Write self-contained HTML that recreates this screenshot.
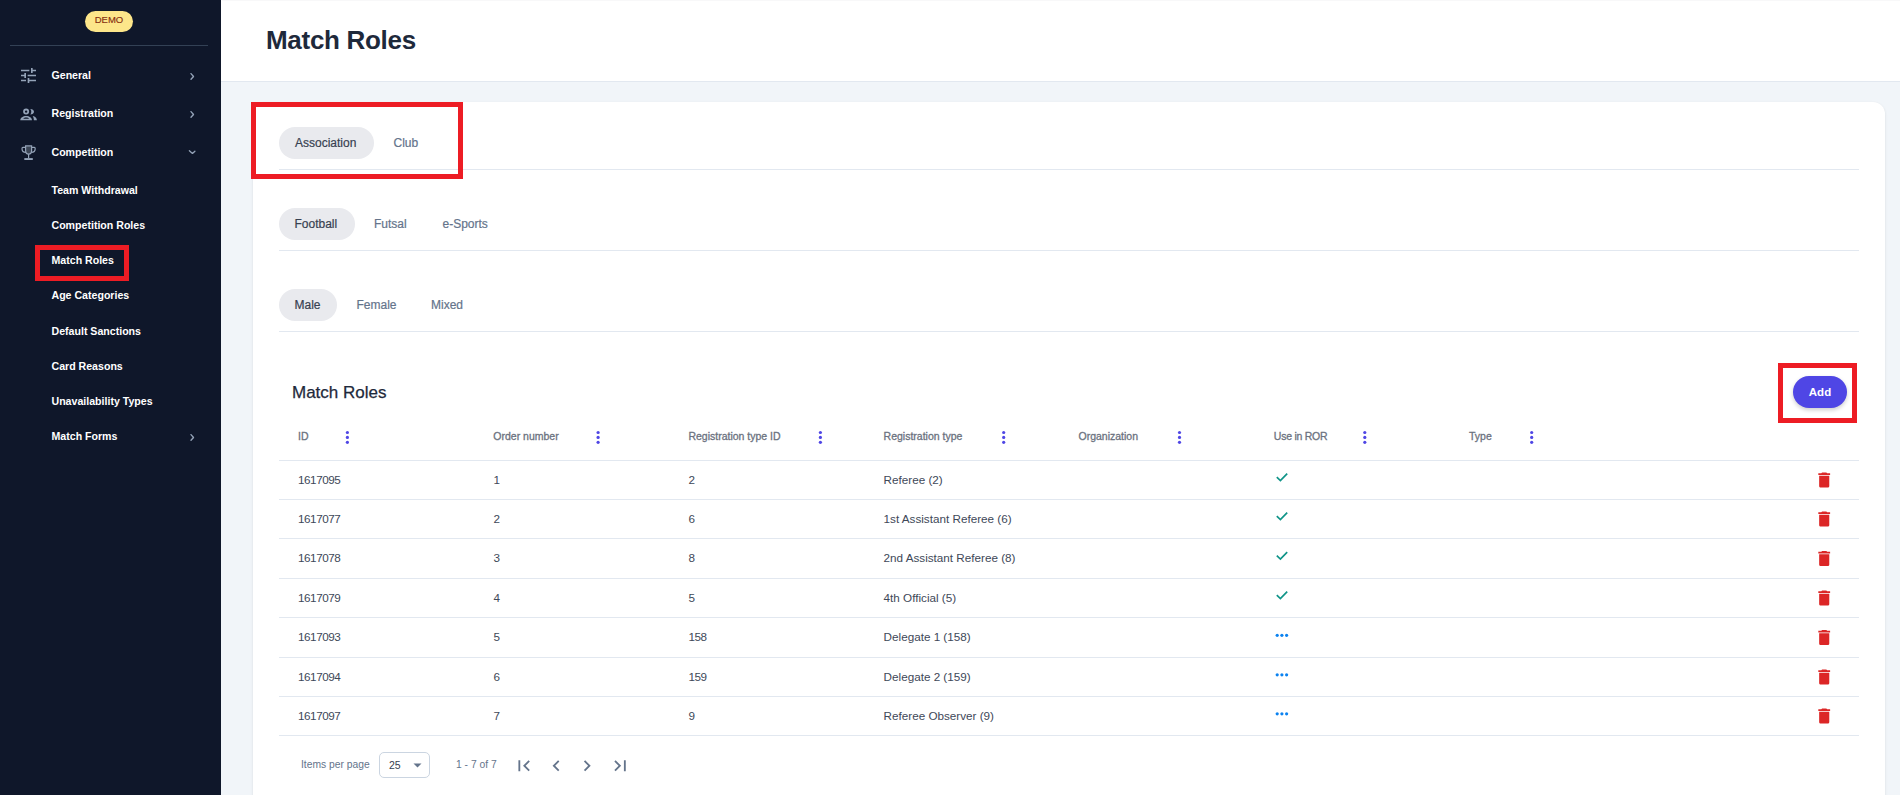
<!DOCTYPE html>
<html>
<head>
<meta charset="utf-8">
<style>
*{box-sizing:border-box;margin:0;padding:0}
html,body{width:1900px;height:795px;overflow:hidden;background:#f1f5f9;font-family:"Liberation Sans",sans-serif}
.abs{position:absolute}
#side{position:absolute;left:0;top:0;width:221px;height:795px;background:#0f172a}
#demo{position:absolute;left:85px;top:11px;width:48px;height:21px;border-radius:11px;background:#fde68a;color:#862e10;font-size:9.5px;line-height:18.5px;text-align:center;-webkit-text-stroke:0.15px #862e10}
#sep{position:absolute;left:10px;top:45px;width:198px;height:1px;background:#334155}
.nav{position:absolute;color:#fff;font-weight:bold;font-size:10.6px;white-space:nowrap;line-height:1}
.ico{position:absolute}
#head{position:absolute;left:221px;top:0;width:1679px;height:82px;background:#fff;border-bottom:1px solid #e2e8f0}
#title{position:absolute;left:266px;top:27px;font-size:26px;font-weight:bold;color:#1e293b;letter-spacing:-0.3px;line-height:1;white-space:nowrap}
#card{position:absolute;left:253px;top:102px;width:1632px;height:720px;background:#fff;border-radius:12px;box-shadow:0 1px 3px 0 rgba(0,0,0,.1),0 1px 1px 0 rgba(0,0,0,.03)}
.pill{position:absolute;height:32px;border-radius:16px;background:#e9eaee}
.tab{position:absolute;font-size:12px;color:#64748b;white-space:nowrap;line-height:1;-webkit-text-stroke-width:0.2px}
.tab.on{color:#374151}
.div{position:absolute;left:279px;width:1580px;height:1px;background:#e2e8f0}
.red{position:absolute;border:5px solid #ed1c24}
.sub{position:absolute;font-size:17px;color:#1e293b;white-space:nowrap;line-height:1;-webkit-text-stroke:0.25px #1e293b}
#add{position:absolute;left:1793px;top:376px;width:54px;height:32px;border-radius:16px;background:#4f46e5;color:#fff;font-weight:bold;font-size:11.5px;line-height:32px;text-align:center;box-shadow:0 2px 4px rgba(0,0,0,.2)}
.th{position:absolute;font-size:10.5px;font-weight:normal;color:#6b7280;white-space:nowrap;line-height:1;-webkit-text-stroke:0.3px #6b7280}
.keb{position:absolute;top:430px}
.td{position:absolute;font-size:11.7px;color:#404858;white-space:nowrap;line-height:1}
.num{letter-spacing:-0.45px}
.rl{position:absolute;left:279px;width:1580px;height:1px;background:#e2e8f0}
.pg{position:absolute;font-size:10.3px;color:#64748b;white-space:nowrap;line-height:1}
#sel{position:absolute;left:379px;top:752px;width:51px;height:26px;border:1px solid #cbd5e1;border-radius:5px;background:#fff}
#sel span{position:absolute;left:9px;top:7px;font-size:10.5px;color:#374151;line-height:1}
</style>
</head>
<body>
<div id="side">
<div id="demo">DEMO</div><div id="sep"></div>
<svg class="abs" style="left:0;top:0" width="221" height="200" viewBox="0 0 221 200">
<g transform="translate(18.5 65.5) scale(0.8333)" fill="#94a3b8"><path d="M3 17v2h6v-2H3zM3 5v2h10V5H3zm10 16v-2h8v-2h-8v-2h-2v6h2zM7 9v2H3v2h4v2h2V9H7zm14 4v-2H11v2h10zm-6-4h2V7h4V5h-4V3h-2v6z"/></g>
<circle cx="26.1" cy="111.6" r="2.1" fill="none" stroke="#94a3b8" stroke-width="1.8"/>
<path d="M30.3 108.9C32.5 108.9 34 110.2 34 111.75C34 113.3 32.5 114.6 30.3 114.6C31 113.8 31.3 112.8 31.3 111.75C31.3 110.7 31 109.7 30.3 108.9Z" fill="#94a3b8"/>
<path fill-rule="evenodd" fill="#94a3b8" d="M20.3 120.3C20.3 117.6 23 115.9 26.15 115.9C29.3 115.9 32 117.6 32 120.3ZM23.2 118.8C23.8 118 24.9 117.5 26.15 117.5C27.4 117.5 28.5 118 29.1 118.8Z"/>
<path fill="#94a3b8" d="M32.7 116C35.2 116.5 36.9 118.1 36.9 120.3H33.9C33.9 118.6 33.5 117.2 32.7 116Z"/>
<path d="M25.6 145.9H31.6V150.5C31.6 152.6 30.3 154.1 28.6 154.1C26.9 154.1 25.6 152.6 25.6 150.5Z" fill="#3b4555" stroke="#94a3b8" stroke-width="1.2"/>
<path d="M25.6 147.4H22.9C22.3 147.4 22 147.9 22 148.8C22 150.9 23.4 152.4 25.9 152.4M31.6 147.4H34.3C34.9 147.4 35.2 147.9 35.2 148.8C35.2 150.9 33.8 152.4 31.3 152.4" fill="none" stroke="#94a3b8" stroke-width="1.2"/>
<path d="M28.6 154V158.3" stroke="#94a3b8" stroke-width="1.2"/>
<rect x="24.3" y="158.1" width="8.5" height="1.9" fill="#94a3b8"/>
</svg>
<div class="nav" style="left:51.5px;top:70px;">General</div>
<div class="nav" style="left:51.5px;top:108px;">Registration</div>
<div class="nav" style="left:51.5px;top:146.5px;">Competition</div>
<div class="nav" style="left:51.5px;top:184.8px;">Team Withdrawal</div>
<div class="nav" style="left:51.5px;top:219.8px;">Competition Roles</div>
<div class="nav" style="left:51.5px;top:254.9px;">Match Roles</div>
<div class="nav" style="left:51.5px;top:290.3px;">Age Categories</div>
<div class="nav" style="left:51.5px;top:325.6px;">Default Sanctions</div>
<div class="nav" style="left:51.5px;top:360.7px;">Card Reasons</div>
<div class="nav" style="left:51.5px;top:395.8px;">Unavailability Types</div>
<div class="nav" style="left:51.5px;top:430.8px;">Match Forms</div>
<svg class="abs" style="left:184px;top:68px" width="16" height="16" viewBox="0 0 16 16"><path d="M7 5.6L9.5 8.45L7 11.3" fill="none" stroke="#94a3b8" stroke-width="1.35" stroke-linecap="round" stroke-linejoin="round"/></svg>
<svg class="abs" style="left:184px;top:106px" width="16" height="16" viewBox="0 0 16 16"><path d="M7 5.6L9.5 8.45L7 11.3" fill="none" stroke="#94a3b8" stroke-width="1.35" stroke-linecap="round" stroke-linejoin="round"/></svg>
<svg class="abs" style="left:184px;top:144px" width="16" height="16" viewBox="0 0 16 16"><path d="M5.4 6.8L8.45 9.4L10.9 7.2" fill="none" stroke="#94a3b8" stroke-width="1.35" stroke-linecap="round" stroke-linejoin="round"/></svg>
<svg class="abs" style="left:184px;top:428.5px" width="16" height="16" viewBox="0 0 16 16"><path d="M7 5.6L9.5 8.45L7 11.3" fill="none" stroke="#94a3b8" stroke-width="1.35" stroke-linecap="round" stroke-linejoin="round"/></svg>
</div>
<div id="head"></div>
<div class="abs" style="left:222px;top:0;width:1678px;height:1px;background:#f8f8f9"></div>
<div id="title">Match Roles</div>
<div id="card"></div>
<div class="pill" style="left:279px;top:127px;width:95px"></div>
<div class="tab on" style="left:295px;top:137px;">Association</div>

<div class="tab" style="left:393.5px;top:137px;">Club</div>

<div class="div" style="top:169px"></div>
<div class="pill" style="left:279px;top:208px;width:76px"></div>
<div class="tab on" style="left:294.5px;top:218px;">Football</div>

<div class="tab" style="left:374px;top:218px;">Futsal</div>

<div class="tab" style="left:442.5px;top:218px;">e-Sports</div>

<div class="div" style="top:250px"></div>
<div class="pill" style="left:279px;top:289px;width:58px"></div>
<div class="tab on" style="left:294.5px;top:299px;">Male</div>

<div class="tab" style="left:356.5px;top:299px;">Female</div>

<div class="tab" style="left:431px;top:299px;">Mixed</div>

<div class="div" style="top:331px"></div>
<div class="sub" style="left:292px;top:384px;">Match Roles</div>
<div id="add">Add</div>
<div class="th" style="left:298px;top:431.3px;">ID</div>
<div class="th" style="left:493.3px;top:431.3px;">Order number</div>
<div class="th" style="left:688.4px;top:431.3px;">Registration type ID</div>
<div class="th" style="left:883.6px;top:431.3px;">Registration type</div>
<div class="th" style="left:1078.5px;top:431.3px;">Organization</div>
<div class="th" style="left:1273.8px;top:431.3px;letter-spacing:-0.25px">Use in ROR</div>
<div class="th" style="left:1469px;top:431.3px;">Type</div>
<div class="td num" style="left:298px;top:473.9px;">1617095</div>
<div class="td num" style="left:493.5px;top:473.9px;">1</div>
<div class="td num" style="left:688.5px;top:473.9px;">2</div>
<div class="td" style="left:883.6px;top:473.9px;">Referee (2)</div>
<div class="td num" style="left:298px;top:512.9px;">1617077</div>
<div class="td num" style="left:493.5px;top:512.9px;">2</div>
<div class="td num" style="left:688.5px;top:512.9px;">6</div>
<div class="td" style="left:883.6px;top:512.9px;">1st Assistant Referee (6)</div>
<div class="td num" style="left:298px;top:552.4px;">1617078</div>
<div class="td num" style="left:493.5px;top:552.4px;">3</div>
<div class="td num" style="left:688.5px;top:552.4px;">8</div>
<div class="td" style="left:883.6px;top:552.4px;">2nd Assistant Referee (8)</div>
<div class="td num" style="left:298px;top:591.9px;">1617079</div>
<div class="td num" style="left:493.5px;top:591.9px;">4</div>
<div class="td num" style="left:688.5px;top:591.9px;">5</div>
<div class="td" style="left:883.6px;top:591.9px;">4th Official (5)</div>
<div class="td num" style="left:298px;top:631.4px;">1617093</div>
<div class="td num" style="left:493.5px;top:631.4px;">5</div>
<div class="td num" style="left:688.5px;top:631.4px;">158</div>
<div class="td" style="left:883.6px;top:631.4px;">Delegate 1 (158)</div>
<div class="td num" style="left:298px;top:670.9px;">1617094</div>
<div class="td num" style="left:493.5px;top:670.9px;">6</div>
<div class="td num" style="left:688.5px;top:670.9px;">159</div>
<div class="td" style="left:883.6px;top:670.9px;">Delegate 2 (159)</div>
<div class="td num" style="left:298px;top:709.9px;">1617097</div>
<div class="td num" style="left:493.5px;top:709.9px;">7</div>
<div class="td num" style="left:688.5px;top:709.9px;">9</div>
<div class="td" style="left:883.6px;top:709.9px;">Referee Observer (9)</div>
<svg class="abs" style="left:0;top:0" width="1900" height="795" viewBox="0 0 1900 795">
<circle cx="347.4" cy="432.5" r="1.6" fill="#4f46e5"/>
<circle cx="347.4" cy="437.4" r="1.6" fill="#4f46e5"/>
<circle cx="347.4" cy="442.3" r="1.6" fill="#4f46e5"/>
<circle cx="598.1" cy="432.5" r="1.6" fill="#4f46e5"/>
<circle cx="598.1" cy="437.4" r="1.6" fill="#4f46e5"/>
<circle cx="598.1" cy="442.3" r="1.6" fill="#4f46e5"/>
<circle cx="820.4" cy="432.5" r="1.6" fill="#4f46e5"/>
<circle cx="820.4" cy="437.4" r="1.6" fill="#4f46e5"/>
<circle cx="820.4" cy="442.3" r="1.6" fill="#4f46e5"/>
<circle cx="1003.7" cy="432.5" r="1.6" fill="#4f46e5"/>
<circle cx="1003.7" cy="437.4" r="1.6" fill="#4f46e5"/>
<circle cx="1003.7" cy="442.3" r="1.6" fill="#4f46e5"/>
<circle cx="1179.5" cy="432.5" r="1.6" fill="#4f46e5"/>
<circle cx="1179.5" cy="437.4" r="1.6" fill="#4f46e5"/>
<circle cx="1179.5" cy="442.3" r="1.6" fill="#4f46e5"/>
<circle cx="1364.8" cy="432.5" r="1.6" fill="#4f46e5"/>
<circle cx="1364.8" cy="437.4" r="1.6" fill="#4f46e5"/>
<circle cx="1364.8" cy="442.3" r="1.6" fill="#4f46e5"/>
<circle cx="1531.7" cy="432.5" r="1.6" fill="#4f46e5"/>
<circle cx="1531.7" cy="437.4" r="1.6" fill="#4f46e5"/>
<circle cx="1531.7" cy="442.3" r="1.6" fill="#4f46e5"/>
<rect x="279" y="460" width="1580" height="1" fill="#e2e8f0"/>
<path d="M1276.8 477.20L1280.4 480.55L1287.2 473.60" fill="none" stroke="#0f9488" stroke-width="1.7"/>
<g transform="translate(1814.1 469.90) scale(0.843)" fill="#dc2626"><path d="M6 19c0 1.1.9 2 2 2h8c1.1 0 2-.9 2-2V7H6v12zM19 4h-3.5l-1-1h-5l-1 1H5v2h14V4z"/></g>
<rect x="279" y="499" width="1580" height="1" fill="#e2e8f0"/>
<path d="M1276.8 516.20L1280.4 519.55L1287.2 512.60" fill="none" stroke="#0f9488" stroke-width="1.7"/>
<g transform="translate(1814.1 508.90) scale(0.843)" fill="#dc2626"><path d="M6 19c0 1.1.9 2 2 2h8c1.1 0 2-.9 2-2V7H6v12zM19 4h-3.5l-1-1h-5l-1 1H5v2h14V4z"/></g>
<rect x="279" y="538" width="1580" height="1" fill="#e2e8f0"/>
<path d="M1276.8 555.70L1280.4 559.05L1287.2 552.10" fill="none" stroke="#0f9488" stroke-width="1.7"/>
<g transform="translate(1814.1 548.40) scale(0.843)" fill="#dc2626"><path d="M6 19c0 1.1.9 2 2 2h8c1.1 0 2-.9 2-2V7H6v12zM19 4h-3.5l-1-1h-5l-1 1H5v2h14V4z"/></g>
<rect x="279" y="578" width="1580" height="1" fill="#e2e8f0"/>
<path d="M1276.8 595.20L1280.4 598.55L1287.2 591.60" fill="none" stroke="#0f9488" stroke-width="1.7"/>
<g transform="translate(1814.1 587.90) scale(0.843)" fill="#dc2626"><path d="M6 19c0 1.1.9 2 2 2h8c1.1 0 2-.9 2-2V7H6v12zM19 4h-3.5l-1-1h-5l-1 1H5v2h14V4z"/></g>
<rect x="279" y="617" width="1580" height="1" fill="#e2e8f0"/>
<circle cx="1277.2" cy="635.30" r="1.6" fill="#0b82f0"/>
<circle cx="1281.9" cy="635.30" r="1.6" fill="#0b82f0"/>
<circle cx="1286.6" cy="635.30" r="1.6" fill="#0b82f0"/>
<g transform="translate(1814.1 627.40) scale(0.843)" fill="#dc2626"><path d="M6 19c0 1.1.9 2 2 2h8c1.1 0 2-.9 2-2V7H6v12zM19 4h-3.5l-1-1h-5l-1 1H5v2h14V4z"/></g>
<rect x="279" y="657" width="1580" height="1" fill="#e2e8f0"/>
<circle cx="1277.2" cy="674.80" r="1.6" fill="#0b82f0"/>
<circle cx="1281.9" cy="674.80" r="1.6" fill="#0b82f0"/>
<circle cx="1286.6" cy="674.80" r="1.6" fill="#0b82f0"/>
<g transform="translate(1814.1 666.90) scale(0.843)" fill="#dc2626"><path d="M6 19c0 1.1.9 2 2 2h8c1.1 0 2-.9 2-2V7H6v12zM19 4h-3.5l-1-1h-5l-1 1H5v2h14V4z"/></g>
<rect x="279" y="696" width="1580" height="1" fill="#e2e8f0"/>
<circle cx="1277.2" cy="713.80" r="1.6" fill="#0b82f0"/>
<circle cx="1281.9" cy="713.80" r="1.6" fill="#0b82f0"/>
<circle cx="1286.6" cy="713.80" r="1.6" fill="#0b82f0"/>
<g transform="translate(1814.1 705.90) scale(0.843)" fill="#dc2626"><path d="M6 19c0 1.1.9 2 2 2h8c1.1 0 2-.9 2-2V7H6v12zM19 4h-3.5l-1-1h-5l-1 1H5v2h14V4z"/></g>
<rect x="279" y="735" width="1580" height="1" fill="#e2e8f0"/>
</svg>
<div class="pg" style="left:301px;top:760px;">Items per page</div>
<div id="sel"><span>25</span><svg class="abs" style="left:33px;top:10px" width="9" height="5" viewBox="0 0 9 5"><path d="M0.5 0.5h8L4.5 4.5z" fill="#64748b"/></svg></div>
<div class="pg" style="left:456px;top:760px;">1 - 7 of 7</div>
<svg class="abs" style="left:0;top:0" width="700" height="795" viewBox="0 0 700 795" fill="#64748b">
<g transform="translate(512.9 754.8) scale(0.92)"><path d="M18.41 16.59L13.82 12l4.59-4.59L17 6l-6 6 6 6zM6 6h2v12H6z"/></g>
<g transform="translate(545.2 754.8) scale(0.92)"><path d="M15.41 7.41L14 6l-6 6 6 6 1.41-1.41L10.83 12z"/></g>
<g transform="translate(576.0 754.8) scale(0.92)"><path d="M10 6L8.59 7.41 13.17 12l-4.58 4.59L10 18l6-6z"/></g>
<g transform="translate(609.2 754.8) scale(0.92)"><path d="M5.59 7.41L10.18 12l-4.59 4.59L7 18l6-6-6-6zM16 6h2v12h-2z"/></g>
</svg>
<div class="red" style="left:251px;top:102px;width:212px;height:77px"></div>
<div class="red" style="left:35px;top:245px;width:94px;height:36px"></div>
<div class="red" style="left:1778px;top:363px;width:79px;height:60px"></div>
</body>
</html>
